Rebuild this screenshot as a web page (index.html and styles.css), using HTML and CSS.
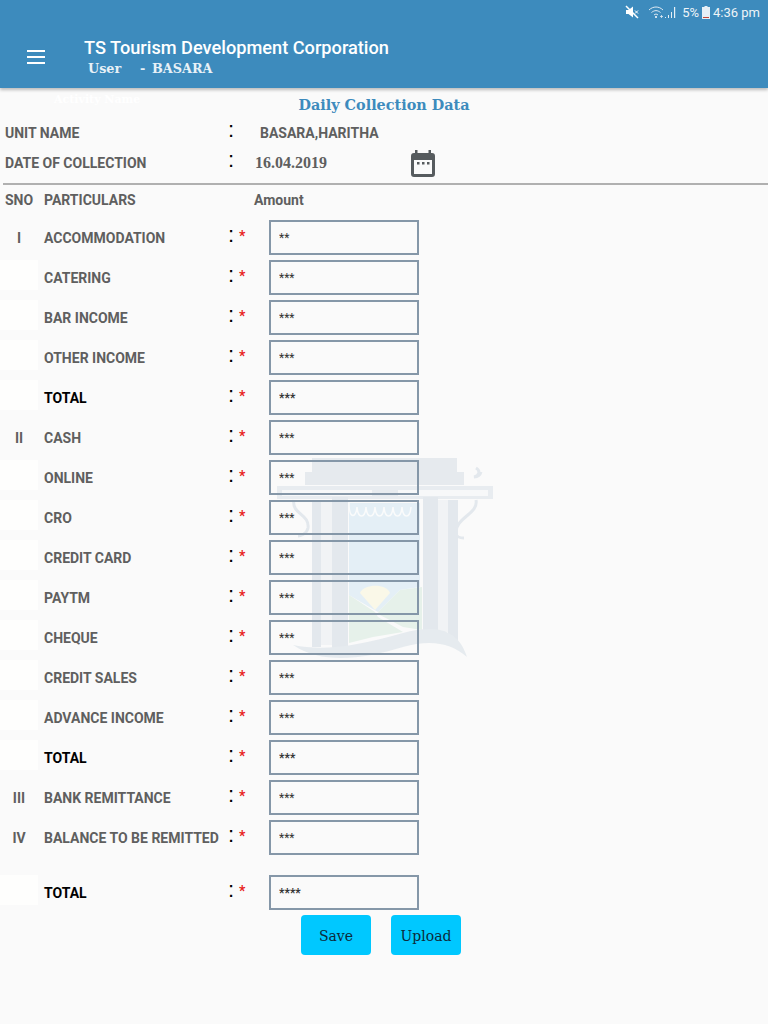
FILE: index.html
```html
<!DOCTYPE html>
<html>
<head>
	<meta charset="utf-8">
	<meta name="viewport" content="width=device-width, initial-scale=1.0">
	<title>Daily Collection Data</title>
	<link rel="stylesheet" href="styles.css">
</head>
<body>
	<header class="appbar">
		<div class="status">
			<svg class="st-mute" width="14" height="14" viewBox="0 0 14 14"><path d="M1 5h2.500L8 1.500v11L3.500 9H1z" fill="#fff"/><path d="M1 1l12 12" stroke="#fff" stroke-width="1.500"/><path d="M10 5.500l3 3M13 5.500l-3 3" stroke="#fff" stroke-width="1"/></svg>
			<svg class="st-wifi" width="30" height="14" viewBox="0 0 30 14"><path d="M1 5c4-4 10-4 14 0M3.500 7.500c3-2.500 6-2.500 9 0M6 10c1.500-1.200 2.500-1.200 4 0" fill="none" stroke="#dfeaf3" stroke-width="1"/><circle cx="8" cy="12" r="1" fill="#fff"/><path d="M12 11.500h3M13.500 10v3" stroke="#dfeaf3" stroke-width=".8"/><path d="M17 12h1v1h-1zM20 10h1v3h-1zM23 7h1v6h-1zM26 2h1.200v11H26z" fill="#e6eff6"/></svg>
			<span class="st-text">5%</span>
			<svg class="st-batt" width="8" height="13" viewBox="0 0 8 13"><path d="M2.500 0h3v1H8v12H0V1h2.500z" fill="#e6eff6"/><path d="M1 11h6v1H1z" fill="#c0483a"/></svg>
			<span class="st-text">4:36 pm</span>
		</div>
		<div class="toolbar">
			<div class="menu-btn"><span></span><span></span><span></span></div>
			<div class="app-title">
				<h1>TS Tourism Development Corporation</h1>
				<p><span class="user-word">User</span><span class="dash">-</span><span>BASARA</span></p>
			</div>
		</div>
	</header>

	<main class="page">
		<svg class="watermark" width="220" height="204" viewBox="275 458 220 204">
			<path d="M312 458h145v14H312zM305 472h159v13H305z" fill="#e6eaee"/>
			<path d="M277 486h216v13H277z" fill="#e8ecf0"/>
			<path d="M282 490h90v6h-90zM398 490h90v6h-90z" fill="#f7f8f9"/>
			<path d="M349 503h71v84l-20 3-22 22-29-17z" fill="#e4eff6"/>
			<path d="M349 503c0 16 7 16 8 4 1 12 8 12 9 0 1 12 8 12 9 0 1 12 8 12 9 0 1 12 8 12 9 0 1 12 8 12 9 0 1 12 8 12 9 0" fill="none" stroke="#fafbfb" stroke-width="1.500"/>
			<path d="M360 593c4-9 26-10 30 0l-15 17z" fill="#faf8e8"/>
			<path d="M349 595l26 17 3 5 25 15-30 5-24 6z" fill="#e6f1ea"/>
			<path d="M378 612l22-22 22-3v43l-19-3-23-12z" fill="#e6f1ea"/>
			<path d="M312 500h9v147h-9zM332 497h16v151h-16zM423 497h15v135h-15zM448 500h10v140h-10z" fill="#e3e8ed"/>
			<path d="M321 500h11v145h-11zM438 500h10v132h-10z" fill="#f1f3f5"/>
			<path d="M294 500c-3 14 16 14 14 28-1 6-8 8-10 8M476 500c3 14-22 18-20 34 1 4 6 4 8 4M476 468c5 3 3 8-2 9 3 0 6-1 7-5" fill="none" stroke="#e3e8ed" stroke-width="3"/>
			<path d="M293 645c30 6 60 2 110-12 30-8 55-6 64 24-16-14-36-18-64-10-40 12-80 18-110-2z" fill="#e6ebef"/>
		</svg>

		<h2 class="page-title">Daily Collection Data</h2>
		<div class="ghost-title">Activity Name</div>

		<div class="info-row">
			<span class="info-label">UNIT NAME</span>
			<span class="colon">:</span>
			<span class="info-value unit">BASARA,HARITHA</span>
		</div>
		<div class="info-row">
			<span class="info-label">DATE OF COLLECTION</span>
			<span class="colon">:</span>
			<span class="info-value date">16.04.2019</span>
			<svg class="cal" width="24" height="27" viewBox="0 0 24 27"><path d="M4 0h2.500v3h11V0H20v3h1c2 0 3 1 3 3v18c0 2-1 3-3 3H3c-2 0-3-1-3-3V6c0-2 1-3 3-3h1z" fill="#565b5e"/><path d="M3 10h18v14H3z" fill="#fafafa"/><path d="M6 12h2.500v2.500H6zM11 12h2.500v2.500H11zM16 12h2.500v2.500H16z" fill="#565b5e"/></svg>
		</div>
		<hr class="divider">

		<div class="head-row">
			<span class="sno-head">SNO</span>
			<span class="part-head">PARTICULARS</span>
			<span class="amt-head">Amount</span>
		</div>

		<div class="rows">
			<div class="row"><span class="sno">I</span><span class="label">ACCOMMODATION</span><span class="colon">:</span><span class="star">*</span><input class="amount" value="**"></div>
			<div class="row"><span class="sno blank"></span><span class="label">CATERING</span><span class="colon">:</span><span class="star">*</span><input class="amount" value="***"></div>
			<div class="row"><span class="sno blank"></span><span class="label">BAR INCOME</span><span class="colon">:</span><span class="star">*</span><input class="amount" value="***"></div>
			<div class="row"><span class="sno blank"></span><span class="label">OTHER INCOME</span><span class="colon">:</span><span class="star">*</span><input class="amount" value="***"></div>
			<div class="row total"><span class="sno blank"></span><span class="label">TOTAL</span><span class="colon">:</span><span class="star">*</span><input class="amount" value="***"></div>
			<div class="row"><span class="sno">II</span><span class="label">CASH</span><span class="colon">:</span><span class="star">*</span><input class="amount" value="***"></div>
			<div class="row"><span class="sno blank"></span><span class="label">ONLINE</span><span class="colon">:</span><span class="star">*</span><input class="amount" value="***"></div>
			<div class="row"><span class="sno blank"></span><span class="label">CRO</span><span class="colon">:</span><span class="star">*</span><input class="amount" value="***"></div>
			<div class="row"><span class="sno blank"></span><span class="label">CREDIT CARD</span><span class="colon">:</span><span class="star">*</span><input class="amount" value="***"></div>
			<div class="row"><span class="sno blank"></span><span class="label">PAYTM</span><span class="colon">:</span><span class="star">*</span><input class="amount" value="***"></div>
			<div class="row"><span class="sno blank"></span><span class="label">CHEQUE</span><span class="colon">:</span><span class="star">*</span><input class="amount" value="***"></div>
			<div class="row"><span class="sno blank"></span><span class="label">CREDIT SALES</span><span class="colon">:</span><span class="star">*</span><input class="amount" value="***"></div>
			<div class="row"><span class="sno blank"></span><span class="label">ADVANCE INCOME</span><span class="colon">:</span><span class="star">*</span><input class="amount" value="***"></div>
			<div class="row total"><span class="sno blank"></span><span class="label">TOTAL</span><span class="colon">:</span><span class="star">*</span><input class="amount" value="***"></div>
			<div class="row"><span class="sno">III</span><span class="label">BANK REMITTANCE</span><span class="colon">:</span><span class="star">*</span><input class="amount" value="***"></div>
			<div class="row"><span class="sno">IV</span><span class="label">BALANCE TO BE REMITTED</span><span class="colon">:</span><span class="star">*</span><input class="amount" value="***"></div>
			<div class="row total grand"><span class="sno blank"></span><span class="label">TOTAL</span><span class="colon">:</span><span class="star">*</span><input class="amount" value="****"></div>
		</div>

		<div class="actions">
			<button class="btn">Save</button>
			<button class="btn">Upload</button>
		</div>
	</main>
</body>
</html>
```

FILE: styles.css
```css
* {
	padding: 0;
	margin: 0;
	box-sizing: border-box;
}
html, body {
	width: 100%;
	height: 100%;
	background: #fafafa;
	font-family: Roboto, sans-serif;
	overflow: hidden;
}
.appbar {
	height: 88px;
	background: #3d8bbd;
	color: white;
	box-shadow: 0 2px 3px rgba(0, 0, 0, 0.25);
	position: relative;
	z-index: 2;
}
.status {
	height: 24px;
	display: flex;
	align-items: center;
	justify-content: flex-end;
	padding-right: 8px;
	gap: 3px;
}
.st-mute {
	margin-right: 6px;
}
.st-wifi {
	margin-right: 1px;
}
.st-text {
	font-size: 13px;
	color: #eef4f8;
}
.toolbar {
	display: flex;
	align-items: flex-start;
	padding: 13px 0 0 27px;
}
.menu-btn {
	width: 18px;
	display: flex;
	flex-direction: column;
	gap: 4px;
	margin: 13px 39px 0 0;
}
.menu-btn span {
	height: 2px;
	background: white;
}
.app-title h1 {
	font-size: 18.2px;
	font-weight: 500;
	line-height: 22px;
}
.app-title p {
	font-family: "DejaVu Serif", serif;
	font-size: 12.8px;
	font-weight: bold;
	line-height: 20px;
	margin-left: 4px;
	color: #e8f1f7;
	display: flex;
}
.user-word {
	width: 52px;
}
.dash {
	width: 12px;
}
.page {
	position: relative;
	height: 936px;
}
.watermark {
	position: absolute;
	left: 275px;
	top: 370px;
}
.page-title {
	font-family: "DejaVu Serif", serif;
	font-size: 14.4px;
	font-weight: bold;
	color: #3d8bbd;
	text-align: center;
	line-height: 20px;
	padding-top: 7px;
	height: 30px;
	position: relative;
}
.ghost-title {
	position: absolute;
	left: 54px;
	top: 5px;
	font-family: "DejaVu Serif", serif;
	font-size: 11px;
	font-weight: bold;
	color: white;
}
.info-row {
	display: flex;
	align-items: center;
	height: 30px;
	padding-left: 5px;
	position: relative;
	font-size: 14px;
	font-weight: bold;
	color: #5f5f5f;
}
.info-label {
	width: 221px;
}
.colon {
	font-family: "Liberation Sans", sans-serif;
	font-size: 22px;
	font-weight: normal;
	color: black;
	width: 10px;
	line-height: 1;
	position: relative;
	top: -3px;
	text-align: center;
}
.info-value.unit {
	margin-left: 24px;
}
.info-value.date {
	margin-left: 19px;
	font-family: "Liberation Serif", serif;
	font-size: 16px;
	font-weight: bold;
	width: 156px;
}
.cal {
	flex: none;
}
.divider {
	border: none;
	height: 2px;
	background: #b0b0b0;
	margin: 5px 0 0 3px;
}
.head-row {
	display: flex;
	align-items: center;
	height: 30px;
	font-size: 14px;
	font-weight: bold;
	color: #5f5f5f;
}
.sno-head {
	width: 44px;
	padding-left: 5px;
}
.part-head {
	width: 210px;
}
.rows {
	margin-top: 5px;
	position: relative;
}
.row {
	display: flex;
	align-items: center;
	height: 35px;
	margin-bottom: 5px;
	font-size: 14px;
	font-weight: bold;
	color: #5f5f5f;
}
.row.grand {
	margin-top: 20px;
	margin-bottom: 5px;
}
.row.total {
	color: black;
}
.sno {
	width: 38px;
	height: 30px;
	line-height: 30px;
	text-align: center;
	margin-right: 6px;
}
.sno.blank {
	background: #fefefd;
	align-self: flex-start;
}
.label {
	width: 182px;
}
.star {
	color: #e82020;
	font-size: 14px;
	font-weight: bold;
	width: 33px;
	padding-left: 3px;
	position: relative;
	top: -2px;
}
.amount {
	width: 150px;
	height: 35px;
	border: 2px solid #8597a8;
	background: transparent;
	padding-left: 8px;
	font-family: Roboto, sans-serif;
	font-size: 12px;
	color: #333;
	outline: none;
}
.row.total .amount {
	font-weight: bold;
}
.actions {
	display: flex;
	gap: 20px;
	padding-left: 301px;
}
.btn {
	width: 70px;
	height: 40px;
	padding-top: 1px;
	border: none;
	border-radius: 4px;
	background: #00c8ff;
	font-family: "DejaVu Serif", serif;
	font-size: 14px;
	color: #0d2a3a;
}
```
